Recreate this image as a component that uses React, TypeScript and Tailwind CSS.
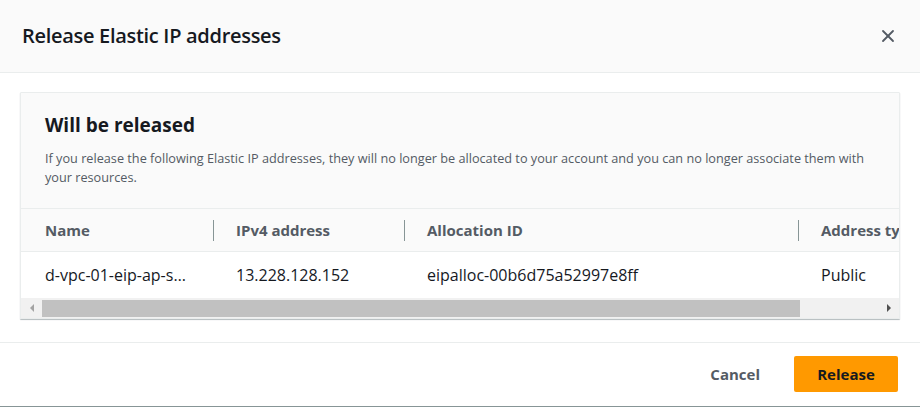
import { X } from "lucide-react";

// Release Elastic IP addresses modal
const columns = [
  { label: "Name", width: "w-[192px]", pl: "pl-6" },
  { label: "IPv4 address", width: "w-[191px]", pl: "pl-[23px]" },
  { label: "Allocation ID", width: "w-[394px]", pl: "pl-[23px]" },
  { label: "Address type", width: "w-[200px]", pl: "pl-[23px]" },
];

const row = ["d-vpc-01-eip-ap-s…", "13.228.128.152", "eipalloc-00b6d75a52997e8ff", "Public"];

export default function App() {
  return (
    <div className="w-[920px] h-[407px] bg-white flex flex-col font-['Open_Sans',sans-serif] overflow-hidden">
      {/* Header */}
      <div className="h-[73px] shrink-0 bg-[#fafafa] border-b border-[#eaeded] flex items-center justify-between pl-[22px] pr-[22px]">
        <h2 className="text-[20px] font-semibold text-[#16191f] tracking-[-0.3px]">Release Elastic IP addresses</h2>
        <X className="w-5 h-5 text-[#545b64]" strokeWidth={2.2} />
      </div>

      {/* Body */}
      <div className="px-5 pt-[19px] pb-[23px]">
        <div className="border border-[#eaeded] shadow-[0_1px_1px_0_rgba(0,28,36,0.3)] rounded-[1px] overflow-hidden">
          <div className="bg-[#fafafa] px-6 pt-[20px] pb-[21px]">
            <h3 className="text-[19px] font-bold text-[#16191f] leading-[24px]">Will be released</h3>
            <p className="mt-[12px] text-[12.7px] leading-[19px] text-[#545b64]">
              If you release the following Elastic IP addresses, they will no longer be allocated to your account and you can no longer associate them with your resources.
            </p>
          </div>

          <div className="overflow-hidden">
            <div className="w-[1000px]">
              {/* header row */}
              <div className="flex h-[44px] bg-[#fafafa] border-t border-b border-[#eaeded]">
                {columns.map((c, i) => (
                  <div key={c.label} className={`${c.width} shrink-0 relative flex items-center ${c.pl}`}>
                    {i > 0 && <span className="absolute left-0 top-[11px] h-[21px] w-px bg-[#879596]" />}
                    <span className="text-[15px] font-bold text-[#545b64] whitespace-nowrap">{c.label}</span>
                  </div>
                ))}
              </div>
              {/* data row */}
              <div className="flex h-[46px] bg-white">
                {row.map((v, i) => (
                  <div key={i} className={`${columns[i].width} shrink-0 flex items-center ${columns[i].pl}`}>
                    <span className="text-[16px] text-[#16191f] whitespace-nowrap">{v}</span>
                  </div>
                ))}
              </div>
            </div>
          </div>

          {/* scrollbar */}
          <div className="h-[20px] bg-[#f1f1f1] flex items-center">
            <div className="w-[21px] flex justify-center">
              <span className="w-0 h-0 border-y-[4px] border-y-transparent border-r-[4px] border-r-[#a3a3a3]" />
            </div>
            <div className="w-[758px] h-[17px] bg-[#c1c1c1]" />
            <div className="flex-1" />
            <div className="w-[21px] flex justify-center">
              <span className="w-0 h-0 border-y-[4px] border-y-transparent border-l-[4px] border-l-[#505050]" />
            </div>
          </div>
        </div>
      </div>

      {/* Footer */}
      <div className="flex-1 border-t border-[#eaeded] flex items-start justify-end pr-[22px] pt-[13px] border-b border-b-[#879596]">
        <button className="h-[36px] px-5 text-[15px] font-bold text-[#545b64] mr-[14px]">Cancel</button>
        <button className="h-[36px] w-[104px] rounded-[2px] bg-[#ff9900] text-[15px] font-bold text-[#16191f]">Release</button>
      </div>
    </div>
  );
}
